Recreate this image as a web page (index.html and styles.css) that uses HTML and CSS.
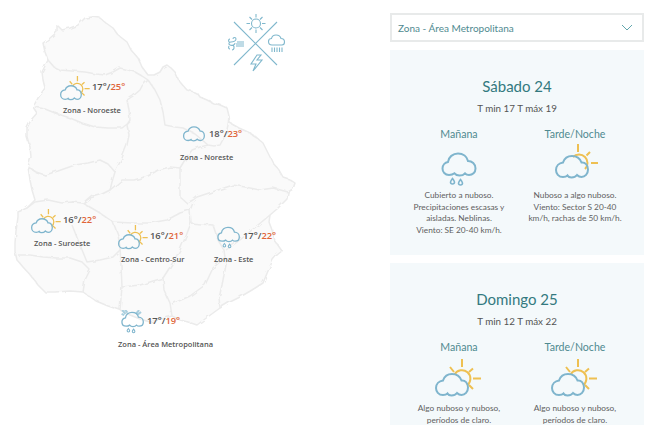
FILE: index.html

```html
<!DOCTYPE html>
<html lang="es">
<head>
  <meta charset="UTF-8" />
  <meta name="viewport" content="width=device-width, initial-scale=1.0" />
  <title>Pronóstico por zonas</title>
  <link rel="stylesheet" href="styles.css">
</head>
<body>
  <svg class="defs" aria-hidden="true">
    <defs>
      <filter id="costa" x="-5%" y="-5%" width="110%" height="110%">
        <feTurbulence type="fractalNoise" baseFrequency="0.14" numOctaves="2" seed="4" />
        <feDisplacementMap in="SourceGraphic" scale="3.5" />
        <feGaussianBlur stdDeviation="0.35" />
      </filter>
      <path id="nube" d="M8 36C3.5 36 1 32.5 1 29C1 25 4 22 8 21.5C9.5 17 13.5 15 17 15C21.5 15 25 17.5 26.5 21.5C30 21 33 24 33 28.5C33 33 30 36 26.5 36C24.5 36 23 35 22 34C20.5 36 18.5 36.5 16.5 36.5C14.5 36.5 13 35.5 12.5 34.5C11.5 35.5 10 36 8 36Z" />
      <g id="sol-nube">
        <g class="i-sol">
          <path d="M19.5 19.5A8.5 8.5 0 1 1 32 30.5" />
          <path d="M27 4V12M38 23.5H46M34 17L38 13.5M19 17L15 12M34 30L38 34" />
        </g>
        <use href="#nube" class="i-nube" y="4" />
      </g>
      <g id="sol-parcial">
        <g class="i-sol">
          <path d="M22 15A8 8 0 0 1 34 27" />
          <path d="M27 2V10M40 21H47M35.5 13.5L39 10" />
        </g>
        <use href="#nube" class="i-nube" x="4" y="-1" />
      </g>
      <use id="nube-sola" href="#nube" class="i-nube" x="3" y="-3" />
      <g id="nube-lluvia">
        <path class="i-nube" d="M14 33C10 33 7.5 30 7.500 26.500C7.500 23 10 20.500 13 20C13.500 15 18 11.500 23 11.500C28 11.500 32 14.500 33 19C37 19 40.500 22 40.500 26.500C40.500 30.500 37.500 33 34 33C32.500 33 31 32.400 30 31.300C28.500 33 26.500 33.500 24.500 33.500C22.500 33.500 20.500 32.600 19.500 31.300C18 32.500 16 33 14 33Z" />
        <path class="i-gota" d="M17.500 36.500C16 38.500 15.500 39.300 15.500 40C15.500 41.100 16.400 42 17.500 42C18.600 42 19.500 41.100 19.500 40C19.500 39.300 19 38.500 17.500 36.500ZM25.500 37.500C24 39.500 23.500 40.300 23.500 41C23.500 42.100 24.400 43 25.500 43C26.600 43 27.500 42.100 27.500 41C27.500 40.300 27 39.500 25.500 37.500Z" />
      </g>
      <g id="nube-metro">
        <path class="i-rayos" d="M8 8L13 14M12 7L16 12M34 8L29 14M37 11L32 15M7 14L11 16" />
        <use href="#nube-lluvia" />
      </g>
    </defs>
  </svg>

  <section class="mapa">
    <svg class="mapa-fondo" viewBox="0 0 330 425">
      <g class="mapa-trazos">
        <path class="depto-borde" d="M85 18L92 17L100 18L106 23L113 28L118 35L127 42L131 50L138 58L142 67L148 75L154 75L160 72L163 67L167 65L171 68L175 72L179 81L187 90L194 92L198 94L200 97L207 100L213 103L220 105L227 108L229 116L230 123L239 128L248 132L256 137L263 143L267 151L273 163L279 170L283 177L289 179L295 183L293 189L288 192L287 199L283 203L277 209L270 215L269 222L272 230L275 241L282 251L277 255L273 260L268 271L263 283L252 290L240 297L230 302L220 308L209 316L197 325L188 322L180 320L172 316L162 319L150 322L140 319L130 315L120 310L108 306L96 301L83 292L70 291L55 292L45 292L38 285L32 277L24 268L17 260L15 252L15 243L16 231L18 217L18 212L27 208L35 200L32 190L30 180L28 167L31 157L30 147L27 137L27 128L31 120L37 113L33 107L38 98L45 88L43 80L42 72L48 60L45 52L43 43L50 38L57 32L57 25L62 30L70 28L78 25Z" />
        <path class="depto-linea" d="M48 60L54 67L60 70L72 71L85 72L96 74L105 75L113 72L120 68L128 70L135 72L142 76L148 80" />
        <path class="depto-linea" d="M148 80L142 86L140 90L133 96L127 100L129 110L130 120L127 125L129 135L127 145L122 158L115 172L112 182L110 190L100 195L90 198L83 203" />
        <path class="depto-linea" d="M35 107L45 109L55 113L70 118L82 123L95 127L108 128L122 128L130 122" />
        <path class="depto-linea" d="M148 80L155 90L160 100L163 112L165 125L175 127L183 128L195 134L208 145L214 146L220 145L226 134L228 125L229 116" />
        <path class="depto-linea" d="M208 145L200 147L192 150L186 158L180 168L170 167L158 170L148 176L134 180L122 180L110 190" />
        <path class="depto-linea" d="M28 167L36 172L45 175L58 171L75 165L88 163L100 160L108 164L115 172" />
        <path class="depto-linea" d="M180 168L180 182L180 197L187 203L193 200L197 197L215 191L233 185L245 187L260 190L273 188L288 192" />
        <path class="depto-linea" d="M193 203L190 210L180 213L167 220L150 223L133 223L113 222L100 213L83 203L92 195" />
        <path class="depto-linea" d="M27 208L35 202L48 200L62 203L72 202L83 203" />
        <path class="depto-linea" d="M190 210L191 223L186 236L180 250L172 264L163 278L164 290L170 303L172 316" />
        <path class="depto-linea" d="M113 222L118 235L120 247L121 265L122 287L120 310" />
        <path class="depto-linea" d="M122 287L140 285L163 278" />
        <path class="depto-linea" d="M191 223L200 224L213 225L218 240L224 250L226 265L222 285L219 298L220 308" />
        <path class="depto-linea" d="M270 215L258 225L240 240L226 250" />
        <path class="depto-linea" d="M172 304L190 296L205 285L213 268L224 258" />
        <path class="depto-linea" d="M18 255L30 255L43 257L57 258L70 258L82 262L90 270L85 280L83 292" />
        <path class="depto-linea" d="M72 225L78 240L87 262L100 260L113 257L120 250" />
      </g>
    </svg>

    <svg class="leyenda" viewBox="0 0 66 62">
      <path d="M10 4L53 47M53 4L10 47" />
      <circle cx="32" cy="5.500" r="4.500" />
      <path d="M32 -4V-0.500M32 11.500V15M22.500 5.500H26M38 5.500H41.500M25.500 -1L28 1.500M38.500 -1L36 1.500M25.500 12L28 9.500M38.500 12L36 9.500" />
      <path d="M48 27C45.500 27 44.500 25 44.500 23.500C44.500 21.500 46 20.500 47.500 20.500C48 18 50 17 52 17C54.500 17 56.500 18.500 57 20.500C59 20.500 60.500 22 60.500 24C60.500 26 59 27 58 27ZM48 29.500V34M50.500 29.500V34M53 29.500V34M55.500 29.500V34M58 29.500V34" />
      <path d="M33 37L27 46H32L29 53L38 42H33L37 37Z" />
      <path d="M9 21C9 19 12 19 12 21C12 23 9 24 7 24C5 24 4 26 6 27C8 28 11 27 11 25M9 27C11 29 10 32 8 32M5 24C4 22 5 21 6 21M5 28C4 30 5 31 6 31M13 24H20M12 26H20M12 28H20" />
    </svg>

    <div class="pin pin-noroeste">
      <div class="pin-fila">
        <svg class="pin-icono" viewBox="0 4 48 47"><use href="#sol-nube" /></svg>
        <span class="temp">17°/<b>25°</b></span>
      </div>
      <div class="pin-nombre">Zona - Noroeste</div>
    </div>
    <div class="pin pin-noreste">
      <div class="pin-fila">
        <svg class="pin-icono pin-icono--angosto" viewBox="0 6 41 47"><use href="#nube-sola" /></svg>
        <span class="temp">18°/<b>23°</b></span>
      </div>
      <div class="pin-nombre">Zona - Noreste</div>
    </div>
    <div class="pin pin-suroeste">
      <div class="pin-fila">
        <svg class="pin-icono" viewBox="0 4 48 47"><use href="#sol-nube" /></svg>
        <span class="temp">16°/<b>22°</b></span>
      </div>
      <div class="pin-nombre">Zona - Suroeste</div>
    </div>
    <div class="pin pin-centro">
      <div class="pin-fila">
        <svg class="pin-icono" viewBox="0 4 48 47"><use href="#sol-nube" /></svg>
        <span class="temp">16°/<b>21°</b></span>
      </div>
      <div class="pin-nombre">Zona - Centro-Sur</div>
    </div>
    <div class="pin pin-este">
      <div class="pin-fila">
        <svg class="pin-icono pin-icono--angosto" viewBox="3 8 41 47"><use href="#nube-lluvia" /></svg>
        <span class="temp">17°/<b>22°</b></span>
      </div>
      <div class="pin-nombre">Zona - Este</div>
    </div>
    <div class="pin pin-metro">
      <div class="pin-fila">
        <svg class="pin-icono pin-icono--angosto" viewBox="3 8 41 47"><use href="#nube-metro" /></svg>
        <span class="temp">17°/<b>19°</b></span>
      </div>
      <div class="pin-nombre">Zona - Área Metropolitana</div>
    </div>
  </section>

  <main class="panel">
    <div class="selector">
      <span>Zona - Área Metropolitana</span>
      <svg class="selector-flecha" viewBox="0 0 12 7"><path d="M1 1L6 6L11 1" /></svg>
    </div>

    <article class="dia">
      <h2>Sábado 24</h2>
      <p class="dia-temp">T min 17 T máx 19</p>
      <div class="turnos">
        <div class="turno">
          <h3>Mañana</h3>
          <svg class="turno-icono" viewBox="0 0 48 47"><use href="#nube-lluvia" /></svg>
          <p>Cubierto a nuboso.<br>Precipitaciones escasas y<br>aisladas. Neblinas.<br>Viento: SE 20-40 km/h.</p>
        </div>
        <div class="turno">
          <h3>Tarde/Noche</h3>
          <svg class="turno-icono" viewBox="0 0 48 47"><use href="#sol-parcial" /></svg>
          <p>Nuboso a algo nuboso.<br>Viento: Sector S 20-40<br>km/h, rachas de 50 km/h.</p>
        </div>
      </div>
    </article>

    <article class="dia">
      <h2>Domingo 25</h2>
      <p class="dia-temp">T min 12 T máx 22</p>
      <div class="turnos">
        <div class="turno">
          <h3>Mañana</h3>
          <svg class="turno-icono" viewBox="0 0 48 47"><use href="#sol-nube" /></svg>
          <p>Algo nuboso y nuboso,<br>períodos de claro.</p>
        </div>
        <div class="turno">
          <h3>Tarde/Noche</h3>
          <svg class="turno-icono" viewBox="0 0 48 47"><use href="#sol-nube" /></svg>
          <p>Algo nuboso y nuboso,<br>períodos de claro.</p>
        </div>
      </div>
    </article>
  </main>
</body>
</html>
```

FILE: styles.css

```css
html, body {
  height: 425px;
  overflow: hidden;
}
body {
  margin: 0;
  background: #fff;
  font-family: 'Lato', 'Open Sans', sans-serif;
  display: flex;
  align-items: flex-start;
}
.defs {
  position: absolute;
  width: 0;
  height: 0;
}

/* iconos */
.i-nube {
  fill: none;
  stroke: #7fb5cd;
  stroke-width: 2;
}
.i-sol path,
.i-rayos {
  fill: none;
  stroke: #eec052;
  stroke-width: 2;
}
.i-rayos {
  stroke: #a9cfdf;
  stroke-width: 3;
}
.i-gota {
  fill: none;
  stroke: #7fb5cd;
  stroke-width: 1.6;
}

/* mapa */
.mapa {
  position: relative;
  flex: 0 0 390px;
  height: 425px;
}
.mapa-fondo {
  position: absolute;
  left: 0;
  top: 0;
  width: 330px;
  height: 425px;
}
.mapa-trazos {
  filter: url(#costa);
}
.depto-borde {
  fill: #fafafa;
  stroke: #ebebeb;
  stroke-width: 1.5;
  stroke-linejoin: round;
}
.depto-linea {
  fill: none;
  stroke: #ebebeb;
  stroke-width: 1.5;
  stroke-linejoin: round;
}
.leyenda {
  position: absolute;
  left: 224px;
  top: 18px;
  width: 66px;
  height: 62px;
  overflow: visible;
}
.leyenda path,
.leyenda circle {
  fill: none;
  stroke: #80b8cd;
  stroke-width: 1.1;
}

.pin {
  position: absolute;
}
.pin-noroeste { left: 63px; top: 76px; }
.pin-noreste { left: 180px; top: 123px; }
.pin-suroeste { left: 34px; top: 209px; }
.pin-centro { left: 121px; top: 225px; }
.pin-este { left: 214px; top: 225px; }
.pin-metro { left: 118px; top: 310px; }

.pin-fila {
  display: flex;
  align-items: flex-start;
  height: 28px;
}
.pin-icono {
  width: 31px;
  height: 30.5px;
  margin-left: -3px;
  flex: none;
}
.pin-icono--angosto {
  width: 26.6px;
  margin-left: 1.4px;
}
.temp {
  margin-left: 1px;
  font-family: 'Open Sans', sans-serif;
  font-size: 9.4px;
  font-weight: 600;
  line-height: 22px;
  color: #555;
  white-space: nowrap;
}
.temp b {
  font-weight: 600;
  color: #e0663a;
}
.pin-nombre {
  font-family: 'Open Sans', sans-serif;
  font-size: 7.5px;
  font-weight: 600;
  line-height: 12px;
  color: #555;
  white-space: nowrap;
}

/* panel derecho */
.panel {
  flex: 0 0 254px;
  margin-top: 13px;
  display: flex;
  flex-direction: column;
  gap: 8px;
}
.selector {
  height: 25px;
  border: 2px solid #e8eaea;
  padding: 0 7px 0 6px;
  display: flex;
  align-items: center;
  justify-content: space-between;
  font-size: 10px;
  color: #4f8a90;
}
.selector-flecha {
  width: 12px;
  height: 7px;
  margin-right: 2px;
}
.selector-flecha path {
  fill: none;
  stroke: #62a6ad;
  stroke-width: 1;
}
.dia {
  background: #f4f9fb;
  padding: 25px 0 18px;
  text-align: center;
}
.dia h2 {
  margin: 0;
  font-size: 15px;
  font-weight: 400;
  line-height: 22px;
  color: #33797f;
}
.dia-temp {
  margin: 4px 0 0;
  font-size: 9.8px;
  line-height: 14px;
  color: #555;
}
.turnos {
  display: flex;
  justify-content: center;
  gap: 14px;
  margin-top: 11px;
}
.turno {
  width: 102px;
}
.turno h3 {
  margin: 0;
  font-size: 10.6px;
  font-weight: 400;
  line-height: 16px;
  color: #4f8a90;
}
.turno-icono {
  display: block;
  width: 48px;
  height: 47px;
  margin: 0 auto;
}
.turno p {
  margin: 1px 0 0;
  font-size: 8.3px;
  line-height: 11.7px;
  color: #5f5f5f;
}
```
